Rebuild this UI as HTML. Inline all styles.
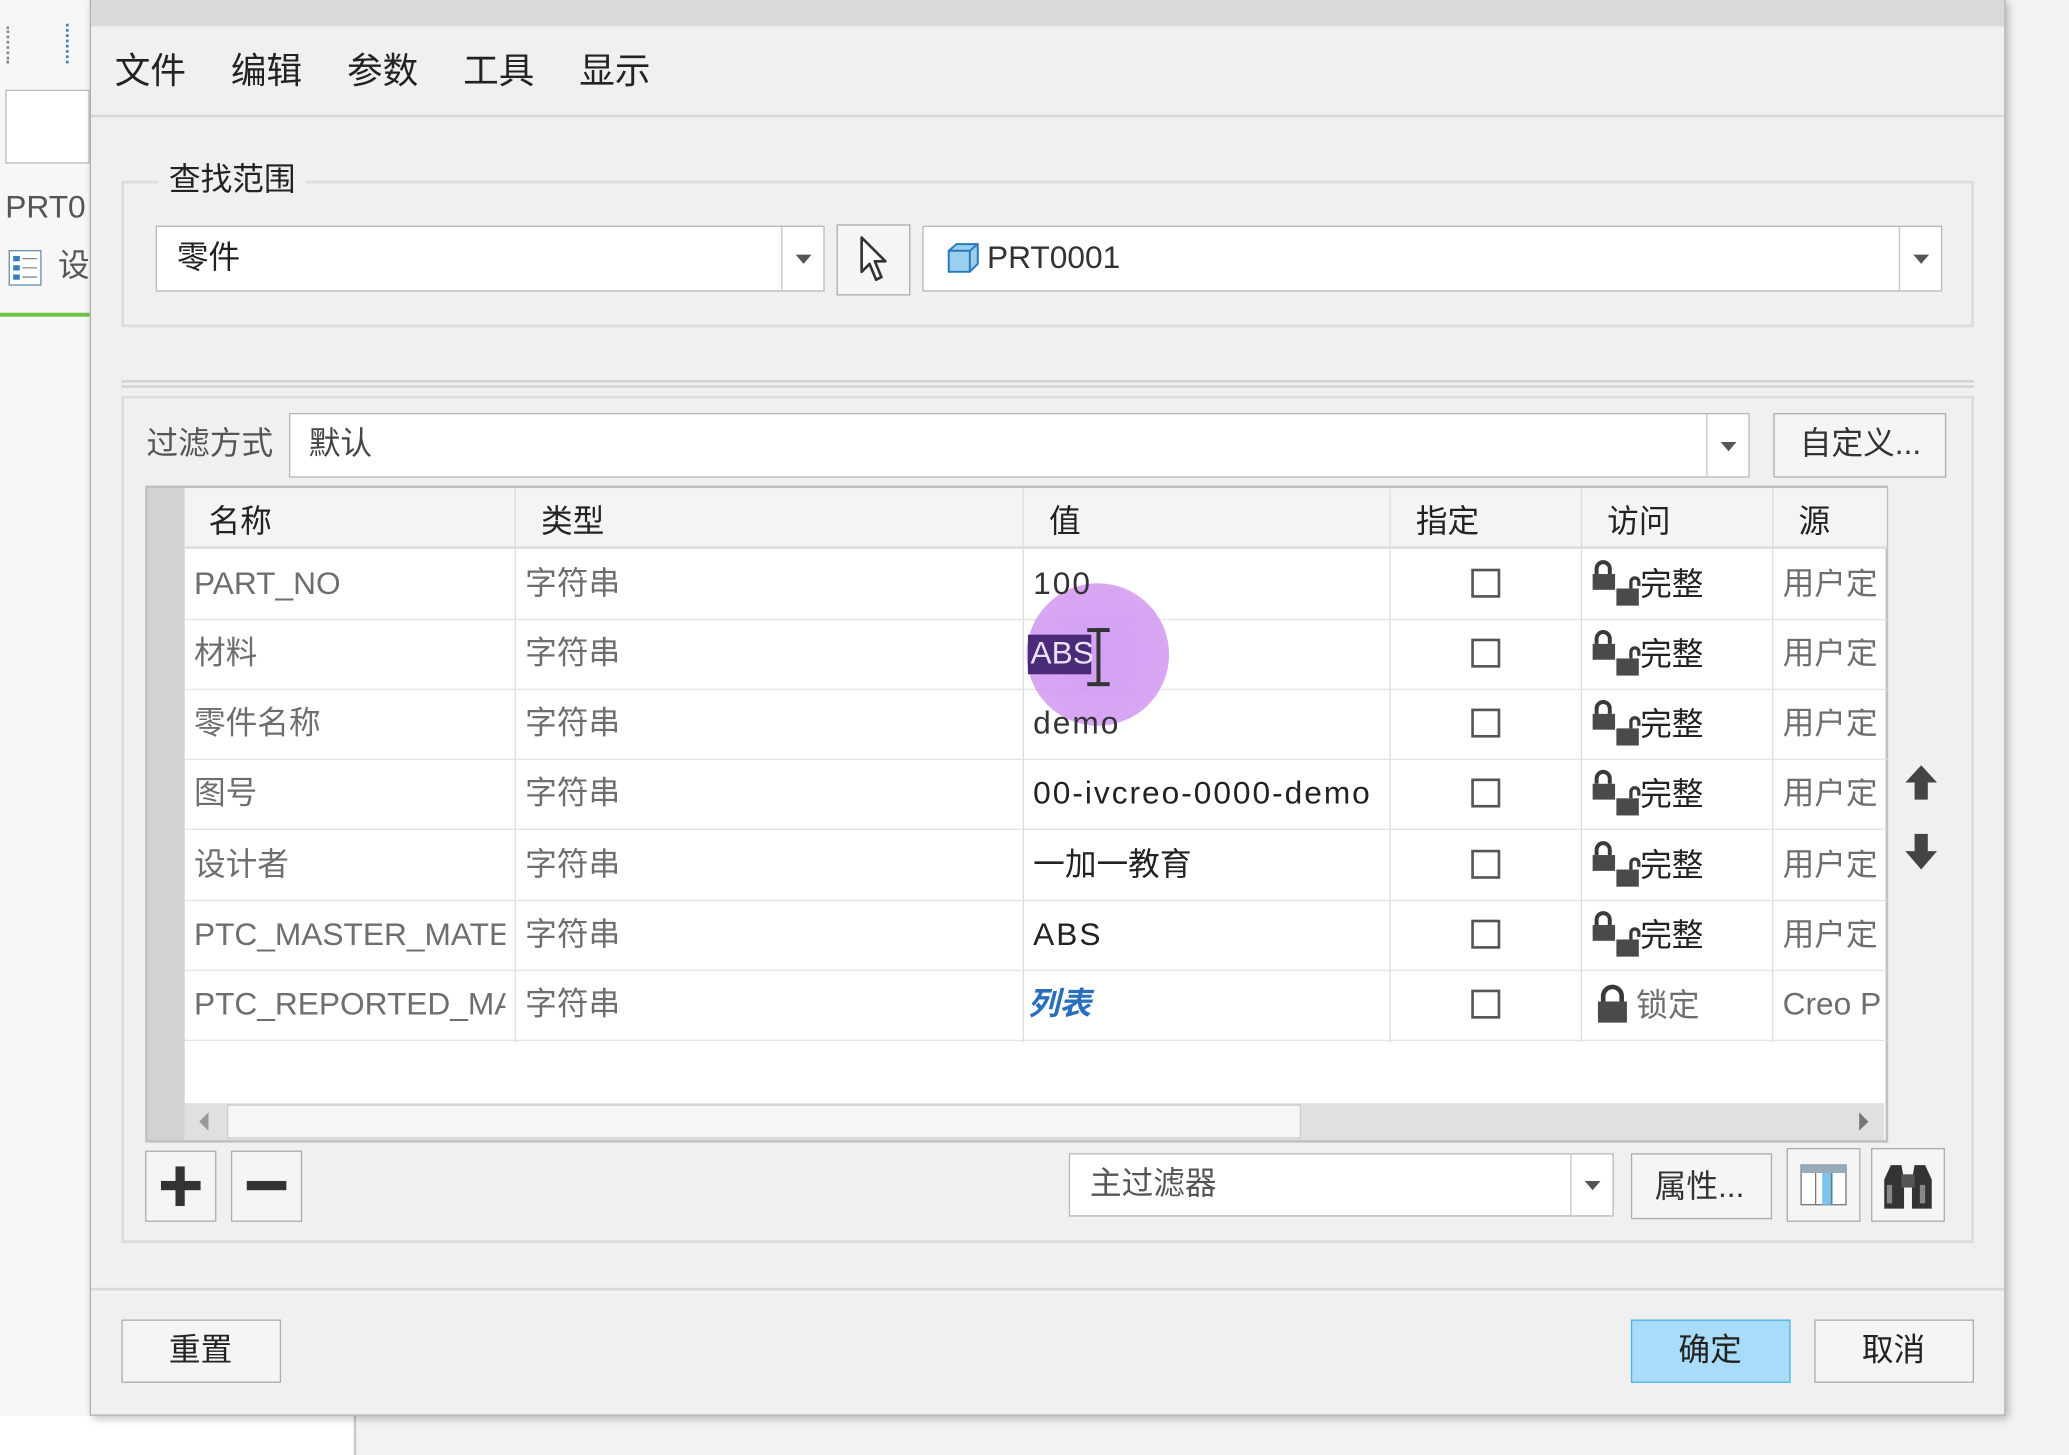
<!DOCTYPE html>
<html><head><meta charset="utf-8">
<style>
html,body{margin:0;padding:0;width:2069px;height:1455px;overflow:hidden;background:#f2f2f2;}
#w{position:absolute;left:0;top:0;width:1568px;height:1103px;transform:scale(1.3195);transform-origin:0 0;font-family:"Liberation Sans","Noto Sans CJK SC",sans-serif;color:#222;}
.a{position:absolute;box-sizing:border-box;}
.t{position:absolute;white-space:nowrap;font-size:24px;line-height:1;}
.box{background:#fff;border:1px solid #b8b8b8;}
.btn{background:#f5f5f5;border:1px solid #adadad;}
.dd{position:absolute;top:0;bottom:0;right:0;border-left:1px solid #c8c8c8;}
.dd:after{content:"";position:absolute;left:50%;top:50%;margin:-3px 0 0 -6px;border-left:6px solid transparent;border-right:6px solid transparent;border-top:7px solid #555;}
.g{color:#6e6e6e}
.v{letter-spacing:1.5px}
.cb{position:absolute;width:22px;height:22px;border:2px solid #555;background:#fff;box-sizing:border-box;}
.clip{overflow:hidden;height:30px}
</style></head><body>
<div id="w">
<div class="a" style="left:0;top:0;width:68px;height:1103px;background:#f7f7f7"></div>
<div class="a" style="left:4px;top:68px;width:64px;height:56px;background:#fff;border:1px solid #bbb"></div>
<div class="t g" style="left:4px;top:146px;font-size:24px;color:#555">PRT0</div>
<svg class="a" style="left:6px;top:189px" width="26" height="28"><rect x="1" y="1" width="24" height="26" fill="#fff" stroke="#6a8fb0"/><g fill="#3a7cc0"><rect x="4" y="5" width="5" height="4"/><rect x="4" y="12" width="5" height="4"/><rect x="4" y="19" width="5" height="4"/></g><g stroke="#888"><line x1="11" y1="7" x2="22" y2="7"/><line x1="11" y1="14" x2="22" y2="14"/><line x1="11" y1="21" x2="22" y2="21"/></g></svg>
<div class="t" style="left:44px;top:190px;color:#555">设</div>
<div class="a" style="left:0;top:237px;width:68px;height:3px;background:#6cc24a"></div>
<div class="a" style="left:5px;top:20px;width:3px;height:28px;border-left:2px dotted #888"></div>
<div class="a" style="left:50px;top:18px;width:18px;height:30px;border-left:2px dotted #3a7cc0"></div>
<div class="a" style="left:0;top:1073px;width:270px;height:30px;background:#fff"></div>
<div class="a" style="left:268px;top:1073px;width:2px;height:30px;background:#ccc"></div>
<div class="a" style="left:1520px;top:0;width:48px;height:1103px;background:#f3f3f3"></div>

<div class="a" style="left:68px;top:0;width:1452px;height:1073px;background:#f0f0f0;border:1px solid #b0b0b0;box-shadow:2px 2px 6px rgba(0,0,0,.25)"></div>
<div class="a" style="left:69px;top:0;width:1450px;height:20px;background:#d9d9d9"></div>
<div class="t" style="left:87px;top:41px;font-size:27px">文件</div>
<div class="t" style="left:175px;top:41px;font-size:27px">编辑</div>
<div class="t" style="left:263px;top:41px;font-size:27px">参数</div>
<div class="t" style="left:351px;top:41px;font-size:27px">工具</div>
<div class="t" style="left:439px;top:41px;font-size:27px">显示</div>
<div class="a" style="left:69px;top:87px;width:1450px;height:2px;background:#d8d8d8"></div>

<div class="a" style="left:92px;top:137px;width:1404px;height:111px;border:2px solid #dcdcdc"></div>
<div class="t" style="left:120px;top:125px;background:#f0f0f0;padding:0 8px">查找范围</div>
<div class="a box" style="left:118px;top:171px;width:507px;height:50px"><div class="dd" style="width:31px"></div></div>
<div class="t" style="left:134px;top:184px">零件</div>
<div class="a btn" style="left:634px;top:170px;width:56px;height:54px"></div>
<svg class="a" style="left:650px;top:178px" width="26" height="38"><path d="M3 2 L3 28 L9 22 L14 34 L18 32 L13 20 L21 20 Z" fill="#fff" stroke="#333" stroke-width="2" stroke-linejoin="round"/></svg>
<div class="a box" style="left:699px;top:171px;width:773px;height:50px"><div class="dd" style="width:31px"></div></div>
<svg class="a" style="left:716px;top:183px" width="28" height="26"><path d="M3 7 L9 2 L25 2 L25 17 L19 23 L3 23 Z" fill="#9ad0ee" stroke="#2a7ab8" stroke-width="1.5"/><path d="M3 7 L19 7 L25 2 M19 7 L19 23" fill="none" stroke="#2a7ab8" stroke-width="1.5"/></svg>
<div class="t" style="left:748px;top:184px;color:#333">PRT0001</div>

<div class="a" style="left:92px;top:288px;width:1404px;height:6px;border-top:2px solid #d4d4d4;border-bottom:2px solid #d4d4d4"></div>

<div class="a" style="left:92px;top:300px;width:1404px;height:642px;border:2px solid #dcdcdc"></div>
<div class="t g" style="left:111px;top:325px;color:#555">过滤方式</div>
<div class="a box" style="left:219px;top:313px;width:1107px;height:49px"><div class="dd" style="width:31px"></div></div>
<div class="t" style="left:234px;top:325px;color:#444">默认</div>
<div class="a btn" style="left:1344px;top:313px;width:131px;height:49px"></div>
<div class="t" style="left:1364px;top:325px;color:#333">自定义...</div>

<div class="a" style="left:110px;top:368px;width:1321px;height:498px;background:#fff;border:2px solid #c0c0c0"></div>
<div class="a" style="left:112px;top:370px;width:28px;height:494px;background:#d2d2d2"></div>
<div class="a" style="left:140px;top:370px;width:1290px;height:46px;background:#f4f4f4;border-bottom:2px solid #ddd"></div>
<div class="t" style="left:158px;top:384px">名称</div>
<div class="t" style="left:410px;top:384px">类型</div>
<div class="t" style="left:795px;top:384px">值</div>
<div class="t" style="left:1073px;top:384px">指定</div>
<div class="t" style="left:1218px;top:384px">访问</div>
<div class="t" style="left:1363px;top:384px">源</div>
<div class="a" style="left:390px;top:370px;width:1px;height:420px;background:#ddd"></div>
<div class="a" style="left:775px;top:370px;width:1px;height:420px;background:#ddd"></div>
<div class="a" style="left:1053px;top:370px;width:1px;height:420px;background:#ddd"></div>
<div class="a" style="left:1198px;top:370px;width:1px;height:420px;background:#ddd"></div>
<div class="a" style="left:1343px;top:370px;width:1px;height:420px;background:#ddd"></div>
<div class="a" style="left:140px;top:469px;width:1290px;height:1px;background:#e4e4e4"></div>
<div class="a" style="left:140px;top:522px;width:1290px;height:1px;background:#e4e4e4"></div>
<div class="a" style="left:140px;top:575px;width:1290px;height:1px;background:#e4e4e4"></div>
<div class="a" style="left:140px;top:628px;width:1290px;height:1px;background:#e4e4e4"></div>
<div class="a" style="left:140px;top:682px;width:1290px;height:1px;background:#e4e4e4"></div>
<div class="a" style="left:140px;top:735px;width:1290px;height:1px;background:#e4e4e4"></div>
<div class="a" style="left:140px;top:788px;width:1290px;height:1px;background:#e4e4e4"></div>

<div class="a" style="left:778px;top:442px;width:108px;height:108px;border-radius:50%;background:radial-gradient(circle,rgba(205,150,245,.9) 0%,rgba(210,150,240,.85) 70%,rgba(240,140,200,.5) 88%,rgba(255,255,255,0) 100%)"></div>

<div class="t g" style="left:147px;top:431px">PART_NO</div><div class="t g" style="left:398px;top:431px">字符串</div><div class="t v" style="left:783px;top:431px;color:#333">100</div>
<div class="t g" style="left:147px;top:484px">材料</div><div class="t g" style="left:398px;top:484px">字符串</div>
<div class="a" style="left:779px;top:481px;width:48px;height:30px;background:#4b2a78"></div><div class="t" style="left:781px;top:484px;color:#e8e0f4">ABS</div>
<div class="a" style="left:831px;top:476px;width:3px;height:44px;background:#333"></div><div class="a" style="left:824px;top:476px;width:17px;height:3px;background:#333"></div><div class="a" style="left:824px;top:517px;width:17px;height:3px;background:#333"></div>
<div class="t g" style="left:147px;top:537px">零件名称</div><div class="t g" style="left:398px;top:537px">字符串</div><div class="t v" style="left:783px;top:537px;color:#333">demo</div>
<div class="t g" style="left:147px;top:590px">图号</div><div class="t g" style="left:398px;top:590px">字符串</div><div class="t v" style="left:783px;top:590px;color:#222">00-ivcreo-0000-demo</div>
<div class="t g" style="left:147px;top:644px">设计者</div><div class="t g" style="left:398px;top:644px">字符串</div><div class="t" style="left:783px;top:644px;color:#222">一加一教育</div>
<div class="t g clip" style="left:147px;top:697px;width:236px">PTC_MASTER_MATE</div><div class="t g" style="left:398px;top:697px">字符串</div><div class="t v" style="left:783px;top:697px;color:#222">ABS</div>
<div class="t g clip" style="left:147px;top:750px;width:236px">PTC_REPORTED_MA</div><div class="t g" style="left:398px;top:750px">字符串</div><div class="t" style="left:779px;top:750px;color:#2a6fbd;font-style:italic;font-weight:bold">列表</div>
<div class="t g clip" style="left:1351px;top:431px;width:76px">用户定</div>
<div class="t g clip" style="left:1351px;top:484px;width:76px">用户定</div>
<div class="t g clip" style="left:1351px;top:537px;width:76px">用户定</div>
<div class="t g clip" style="left:1351px;top:590px;width:76px">用户定</div>
<div class="t g clip" style="left:1351px;top:644px;width:76px">用户定</div>
<div class="t g clip" style="left:1351px;top:697px;width:76px">用户定</div>
<div class="t g clip" style="left:1351px;top:750px;width:76px">Creo P</div>

<div class="cb" style="left:1115px;top:431px"></div>
<div class="cb" style="left:1115px;top:484px"></div>
<div class="cb" style="left:1115px;top:537px"></div>
<div class="cb" style="left:1115px;top:590px"></div>
<div class="cb" style="left:1115px;top:644px"></div>
<div class="cb" style="left:1115px;top:697px"></div>
<div class="cb" style="left:1115px;top:750px"></div>

<svg width="0" height="0" style="position:absolute"><defs><g id="lk"><path d="M4 11 V7 a5 5 0 0 1 10 0 V11" fill="none" stroke="#3a3a3a" stroke-width="3"/><rect x="1" y="11" width="17" height="12" fill="#4a4a4a"/><rect x="19" y="22" width="17" height="13" fill="#4a4a4a"/><path d="M30 22 V17 a3 3 0 0 1 6 0 V20" fill="none" stroke="#3a3a3a" stroke-width="2.5"/></g></defs></svg>
<svg class="a" style="left:1206px;top:424px" width="40" height="40"><use href="#lk"/></svg><div class="t" style="left:1243px;top:432px">完整</div>
<svg class="a" style="left:1206px;top:477px" width="40" height="40"><use href="#lk"/></svg><div class="t" style="left:1243px;top:485px">完整</div>
<svg class="a" style="left:1206px;top:530px" width="40" height="40"><use href="#lk"/></svg><div class="t" style="left:1243px;top:538px">完整</div>
<svg class="a" style="left:1206px;top:583px" width="40" height="40"><use href="#lk"/></svg><div class="t" style="left:1243px;top:591px">完整</div>
<svg class="a" style="left:1206px;top:637px" width="40" height="40"><use href="#lk"/></svg><div class="t" style="left:1243px;top:645px">完整</div>
<svg class="a" style="left:1206px;top:690px" width="40" height="40"><use href="#lk"/></svg><div class="t" style="left:1243px;top:698px">完整</div>
<svg class="a" style="left:1209px;top:746px" width="28" height="32"><path d="M6 13 V9 a7 7 0 0 1 14 0 V13" fill="none" stroke="#3a3a3a" stroke-width="3.5"/><rect x="2" y="13" width="22" height="16" fill="#4a4a4a"/></svg><div class="t g" style="left:1240px;top:751px">锁定</div>

<div class="a" style="left:140px;top:836px;width:1288px;height:28px;background:#e0e0e0"></div>
<div class="a" style="left:172px;top:837px;width:814px;height:26px;background:#f6f6f6;border:1px solid #ccc"></div>
<div class="a" style="left:151px;top:843px;border-top:7px solid transparent;border-bottom:7px solid transparent;border-right:7px solid #999"></div>
<div class="a" style="left:1409px;top:843px;border-top:7px solid transparent;border-bottom:7px solid transparent;border-left:7px solid #777"></div>

<svg class="a" style="left:1443px;top:578px" width="28" height="84"><path d="M13 2 L25 15 H18 V28 H8 V15 H1 Z" fill="#444"/><path d="M8 54 H18 V67 H25 L13 81 L1 67 H8 Z" fill="#444"/></svg>

<div class="a btn" style="left:110px;top:872px;width:54px;height:54px"></div>
<div class="a" style="left:122px;top:895px;width:30px;height:7px;background:#333"></div><div class="a" style="left:133px;top:884px;width:7px;height:30px;background:#333"></div>
<div class="a btn" style="left:175px;top:872px;width:54px;height:54px"></div>
<div class="a" style="left:187px;top:895px;width:30px;height:7px;background:#333"></div>
<div class="a box" style="left:810px;top:874px;width:413px;height:48px"><div class="dd" style="width:31px"></div></div>
<div class="t g" style="left:826px;top:886px;color:#555">主过滤器</div>
<div class="a btn" style="left:1236px;top:874px;width:107px;height:50px"></div>
<div class="t" style="left:1254px;top:888px;color:#333">属性...</div>
<div class="a btn" style="left:1354px;top:870px;width:56px;height:56px"></div>
<svg class="a" style="left:1364px;top:882px" width="36" height="32"><rect x="1" y="1" width="34" height="30" fill="#fff" stroke="#777"/><rect x="1" y="1" width="34" height="6" fill="#9ab"/><rect x="17" y="7" width="8" height="24" fill="#7cc4ee"/><g stroke="#777"><line x1="12" y1="7" x2="12" y2="31"/><line x1="24" y1="7" x2="24" y2="31"/></g></svg>
<div class="a btn" style="left:1418px;top:870px;width:56px;height:56px"></div>
<svg class="a" style="left:1425px;top:880px" width="42" height="38"><path d="M3 14 L8 3 H16 L18 14 V36 H3 Z" fill="#333"/><path d="M39 14 L34 3 H26 L24 14 V36 H39 Z" fill="#333"/><rect x="16" y="10" width="10" height="10" fill="#555"/><rect x="5" y="18" width="4" height="14" fill="#888"/><rect x="30" y="18" width="4" height="14" fill="#888"/></svg>

<div class="a" style="left:69px;top:976px;width:1450px;height:2px;background:#d8d8d8"></div>
<div class="a btn" style="left:92px;top:1000px;width:121px;height:48px"></div>
<div class="t" style="left:128px;top:1012px">重置</div>
<div class="a" style="left:1236px;top:1000px;width:121px;height:48px;background:#a8dcf8;border:1px solid #4fb2ea"></div>
<div class="t" style="left:1272px;top:1012px">确定</div>
<div class="a btn" style="left:1375px;top:1000px;width:121px;height:48px"></div>
<div class="t" style="left:1411px;top:1012px">取消</div>
</div>
</body></html>
